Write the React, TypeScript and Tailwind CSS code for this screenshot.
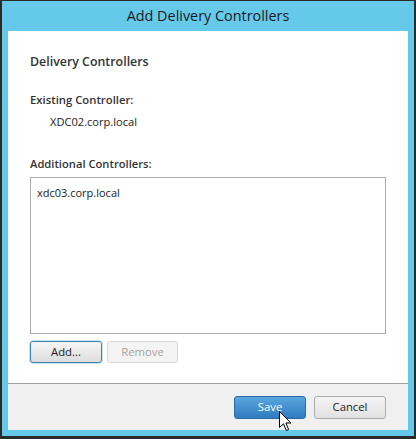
import React from "react";

const font = { fontFamily: '"Segoe UI", "Open Sans", "Noto Sans", sans-serif' };

function Cursor() {
  return (
    <svg
      className="absolute left-[279px] top-[411px]"
      width="13"
      height="21"
      viewBox="0 0 13 21"
    >
      <path
        d="M0.5 0.5 L0.5 16.5 L4.5 12.8 L7.3 19.5 L9.6 18.5 L6.9 12 L12 12 Z"
        fill="#ffffff"
        stroke="#000000"
        strokeWidth="1"
        strokeLinejoin="miter"
      />
    </svg>
  );
}

export default function App() {
  return (
    <div className="relative w-[416px] h-[439px] bg-[#2b2b2b] pt-[1px] px-[2px] pb-[3px]" style={font}>
      <div className="flex flex-col h-full bg-[#65c9ea] px-[6px] pb-[6px]">
        <div className="h-[30px] flex items-center justify-center text-[14.4px] text-[#1b1b1b]">
          Add Delivery Controllers
        </div>
        <div className="flex flex-col flex-1 bg-white">
          <div className="h-[353px] border-b border-[#a0a0a0] px-[22px] text-[11.3px] text-[#333333]">
            <div className="mt-[23px] h-[16px] leading-[16px] font-semibold text-[12.4px]">Delivery Controllers</div>
            <div className="mt-[22px] h-[16px] leading-[16px] font-semibold">Existing Controller:</div>
            <div className="mt-[6px] h-[16px] leading-[16px] pl-[20px] text-[11.1px] text-[#1b1b1b]">XDC02.corp.local</div>
            <div className="mt-[26px] h-[16px] leading-[16px] font-semibold text-[11.2px]">Additional Controllers:</div>
            <div className="mt-[5px] h-[157px] border border-[#ababab] bg-white px-[6px] pt-[7px]">
              <div className="leading-[16px] text-[11px] text-[#1b1b1b]">xdc03.corp.local</div>
            </div>
            <div className="mt-[7px] flex gap-[5px]">
              <button className="w-[72px] h-[22px] rounded-[3px] border border-[#3c7fb1] shadow-[0_0_0_1px_#cde6f7] bg-gradient-to-b from-[#f6f6f6] to-[#dddddd] text-[11.3px] text-[#1b1b1b]">
                Add...
              </button>
              <button className="w-[71px] h-[22px] rounded-[3px] border border-[#d6d6d6] bg-[#f4f4f4] text-[11.3px] text-[#a3a3a3]">
                Remove
              </button>
            </div>
          </div>
          <div className="flex flex-1 justify-end items-start gap-[8px] bg-[#f0f0f0] pt-[12px] pr-[22px]">
            <button className="w-[72px] h-[23px] rounded-[3px] border border-[#2c6ca5] bg-gradient-to-b from-[#5aa6de] to-[#2f7bc0] text-[11.3px] text-white">
              Save
            </button>
            <button className="w-[72px] h-[23px] rounded-[3px] border border-[#acacac] bg-gradient-to-b from-[#f4f4f4] to-[#e2e2e2] text-[11.3px] text-[#1b1b1b]">
              Cancel
            </button>
          </div>
        </div>
      </div>
      <Cursor />
    </div>
  );
}
